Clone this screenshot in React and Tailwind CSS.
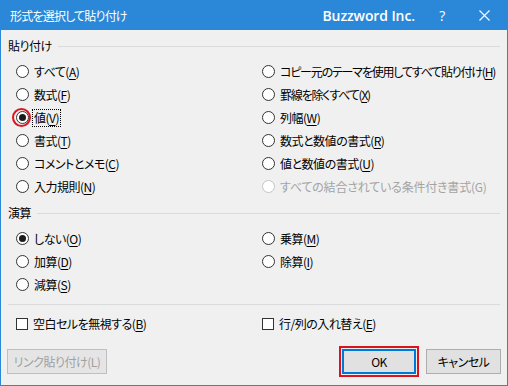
import React from "react";

const FONT = "font-['Noto_Sans_CJK_JP','Noto_Sans_CJK_SC',sans-serif] [font-feature-settings:'palt']";

function Radio({ checked, disabled, ring }) {
  return (
    <span className="relative flex shrink-0">
      <span
        className={`flex h-[13px] w-[13px] items-center justify-center rounded-full border bg-white ${
          disabled ? "border-[#c4c4c4]" : "border-[#333333]"
        }`}
      >
        {checked && <span className="h-[7px] w-[7px] rounded-full bg-[#1b1b1b]" />}
      </span>
      {ring && (
        <span className="absolute -left-[4px] -top-[3px] h-[19px] w-[19px] rounded-full border-2 border-[#e0141e]" />
      )}
    </span>
  );
}

function Label({ text, k, disabled }) {
  return (
    <span className={disabled ? "text-[#a3a3a3]" : "text-black"}>
      {text}
      {k ? (
        <>
          (<span className="underline underline-offset-2 decoration-1">{k}</span>)
        </>
      ) : null}
    </span>
  );
}

function RadioRow({ text, k, checked, disabled, ring, focus, track }) {
  const base = focus ? "px-[1px] outline outline-1 outline-dotted outline-black leading-[16px]" : "px-[1px]";
  return (
    <div className="flex h-[23px] items-center gap-[4px] whitespace-nowrap">
      <Radio checked={checked} disabled={disabled} ring={ring} />
      <span className={`${base} ${track || ""}`}>
        <Label text={text} k={k} disabled={disabled} />
      </span>
    </div>
  );
}

function Heading({ children }) {
  return (
    <div className="flex h-[18px] items-center gap-[6px] pl-[7px] pr-[7px]">
      <span>{children}</span>
      <span className="h-px flex-1 bg-[#dadada]" />
    </div>
  );
}

function Check({ text, k }) {
  return (
    <div className="flex h-[23px] items-center gap-[5px] whitespace-nowrap">
      <span className="h-[12px] w-[12px] shrink-0 border border-[#333333] bg-white" />
      <Label text={text} k={k} />
    </div>
  );
}

export default function App() {
  return (
    <div className={`flex h-[386px] w-[508px] flex-col border border-[#2b88d8] bg-[#f0f0f0] text-[12px] leading-none tracking-[-0.5px] text-black ${FONT}`}>
      <div className="flex h-[29px] shrink-0 items-center bg-[#2b88d8] text-white">
        <span className="pl-[9px] text-[12px] tracking-[-0.8px]">形式を選択して貼り付け</span>
        <span className="ml-auto font-['Open_Sans',sans-serif] text-[14px] font-semibold tracking-[-0.1px] [font-feature-settings:normal]">
          Buzzword Inc.
        </span>
        <span className="flex w-[46px] justify-center pl-[8px] font-['Open_Sans',sans-serif] text-[14px]">?</span>
        <span className="flex w-[46px] items-center justify-center">
          <svg width="11" height="11" viewBox="0 0 11 11" fill="none" stroke="white" strokeWidth="1.1">
            <path d="M0.5 0.5L10.5 10.5M10.5 0.5L0.5 10.5" />
          </svg>
        </span>
      </div>

      <div className="mt-[7px]">
        <Heading>貼り付け</Heading>
      </div>

      <div className="mt-[5px] grid grid-cols-[246px_1fr] pl-[15px]">
        <div className="flex flex-col">
          <RadioRow text="すべて" k="A" />
          <RadioRow text="数式" k="F" />
          <RadioRow text="値" k="V" checked ring focus />
          <RadioRow text="書式" k="T" />
          <RadioRow text="コメントとメモ" k="C" />
          <RadioRow text="入力規則" k="N" />
        </div>
        <div className="flex flex-col">
          <RadioRow text="コピー元のテーマを使用してすべて貼り付け" k="H" track="tracking-[-1.2px]" />
          <RadioRow text="罫線を除くすべて" k="X" track="tracking-[-1.2px]" />
          <RadioRow text="列幅" k="W" />
          <RadioRow text="数式と数値の書式" k="R" />
          <RadioRow text="値と数値の書式" k="U" />
          <RadioRow text="すべての結合されている条件付き書式(G)" disabled track="tracking-[-0.2px]" />
        </div>
      </div>

      <div className="mt-[6px]">
        <Heading>演算</Heading>
      </div>

      <div className="mt-[5px] grid grid-cols-[246px_1fr] pl-[15px]">
        <div className="flex flex-col">
          <RadioRow text="しない" k="O" checked />
          <RadioRow text="加算" k="D" />
          <RadioRow text="減算" k="S" />
        </div>
        <div className="flex flex-col">
          <RadioRow text="乗算" k="M" />
          <RadioRow text="除算" k="I" />
        </div>
      </div>

      <div className="mx-[7px] mt-[8px] h-px bg-[#dadada]" />

      <div className="mt-[7px] grid grid-cols-[246px_1fr] pl-[15px]">
        <Check text="空白セルを無視する" k="B" />
        <Check text="行/列の入れ替え" k="E" />
      </div>

      <div className="mt-[11px] flex items-center px-[6px]">
        <button className="flex h-[25px] w-[100px] items-center justify-center whitespace-nowrap border border-[#bfbfbf] bg-[#e5e5e5] text-[#a0a0a0]">
          リンク貼り付け(L)
        </button>
        <div className="ml-auto flex items-center gap-[7px]">
          <div className="border-2 border-[#d9141c] p-[1px]">
            <button className="flex h-[25px] w-[74px] items-center justify-center border-2 border-[#0078d7] bg-[#e1e1e1]">
              OK
            </button>
          </div>
          <button className="flex h-[25px] w-[75px] items-center justify-center border border-[#adadad] bg-[#e1e1e1]">
            キャンセル
          </button>
        </div>
      </div>
    </div>
  );
}
